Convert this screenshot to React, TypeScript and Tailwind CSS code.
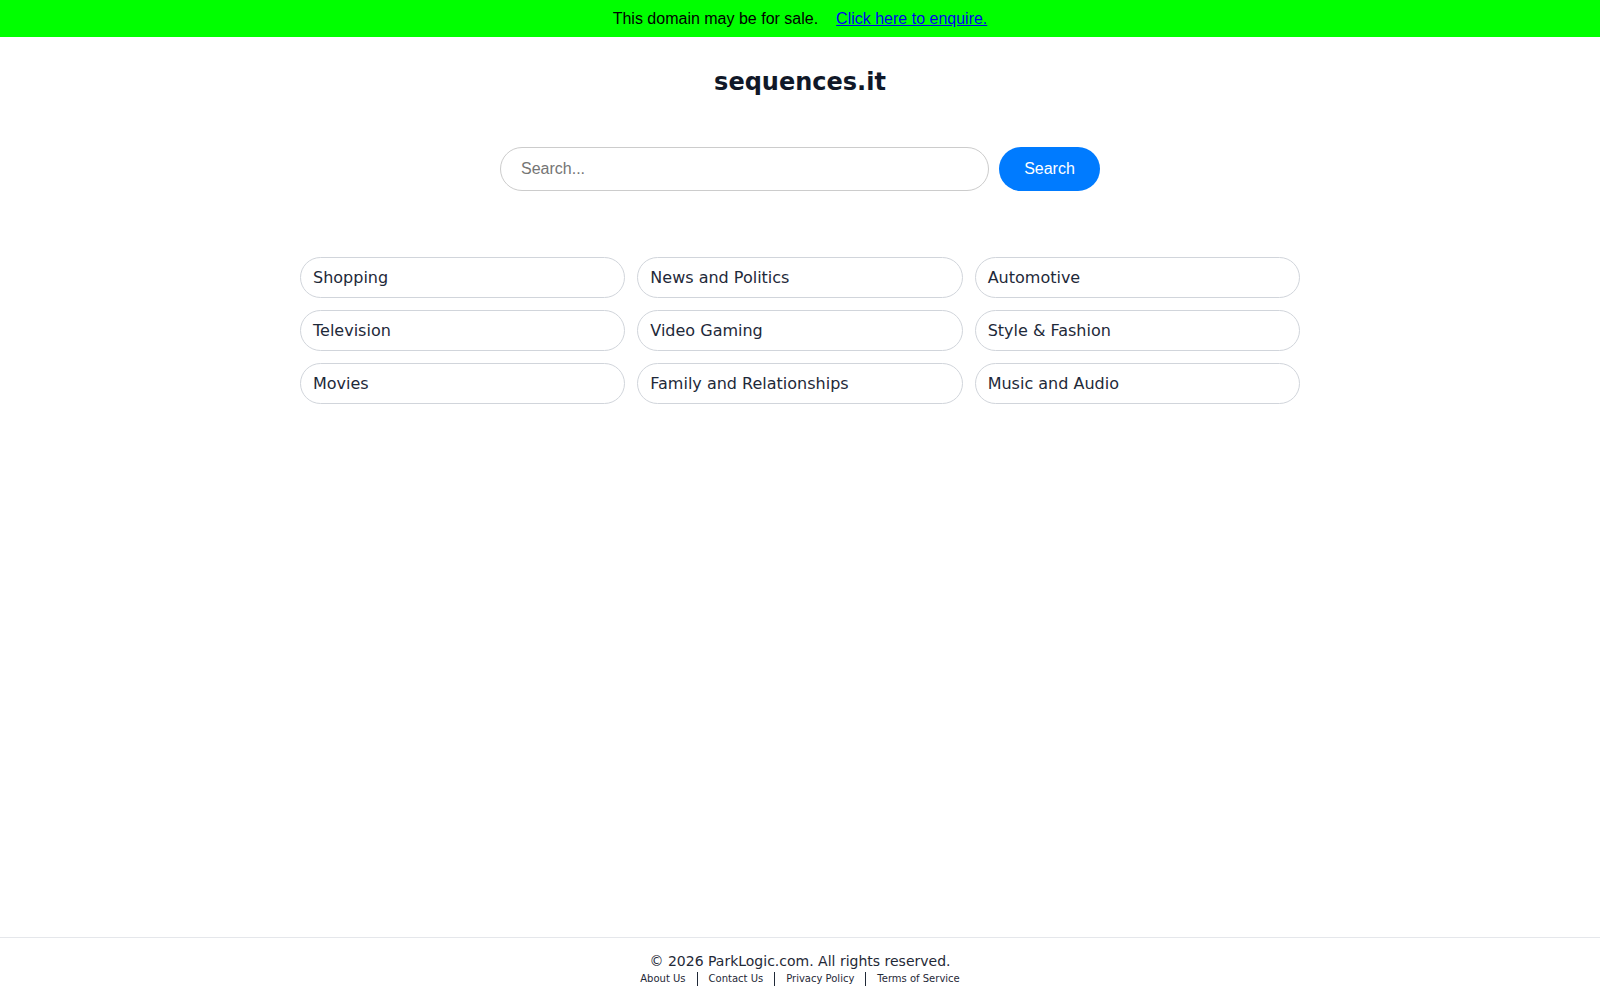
import { useState } from "react";

const categories = [
  "Shopping",
  "News and Politics",
  "Automotive",
  "Television",
  "Video Gaming",
  "Style & Fashion",
  "Movies",
  "Family and Relationships",
  "Music and Audio",
];

const footerLinks = ["About Us", "Contact Us", "Privacy Policy", "Terms of Service"];

export default function App() {
  const [query, setQuery] = useState("");

  return (
    <div className="min-h-screen flex flex-col bg-white font-['DejaVu_Sans',sans-serif]">
      {/* For-sale banner */}
      <div className="h-[37px] bg-[#00ff00] flex items-center justify-center font-['Liberation_Sans',Arial,sans-serif] text-base text-black">
        <span>This domain may be for sale.</span>
        <a href="#" className="ml-[18px] text-[#0000ee] underline">
          Click here to enquire.
        </a>
      </div>

      <main className="flex-1 flex flex-col items-center">
        <h1 className="mt-[29px] text-2xl leading-8 font-bold text-gray-900">sequences.it</h1>

        <form
          className="mt-[49px] flex items-center gap-[10px]"
          onSubmit={e => e.preventDefault()}
        >
          <input
            value={query}
            onChange={e => setQuery(e.target.value)}
            placeholder="Search..."
            className="w-[489px] h-11 rounded-full border border-[#cccccc] px-5 font-['Liberation_Sans',Arial,sans-serif] text-base text-gray-800 placeholder:text-[#757575] outline-none"
          />
          <button
            type="submit"
            className="w-[101px] h-11 rounded-full bg-[#007bff] text-white font-['Liberation_Sans',Arial,sans-serif] text-base"
          >
            Search
          </button>
        </form>

        {/* Related topics */}
        <div className="mt-[66px] w-[1000px] grid grid-cols-3 gap-x-3 gap-y-3">
          {categories.map(c => (
            <a
              key={c}
              href="#"
              className="h-[41px] flex items-center rounded-full border border-[#d1d5db] px-3 text-base text-gray-800"
            >
              {c}
            </a>
          ))}
        </div>
      </main>

      <footer className="border-t border-[#e5e7eb] pt-[13px] pb-[13px] flex flex-col items-center text-[#1f2937]">
        <p className="text-sm leading-5">© 2026 ParkLogic.com. All rights reserved.</p>
        <div className="flex items-center h-4">
          {footerLinks.map((l, i) => {
            const first = i === 0;
            const last = i === footerLinks.length - 1;
            return (
              <a
                key={l}
                href="#"
                className={
                  first
                    ? "text-[10px] leading-[14px] pr-[11px]"
                    : last
                      ? "text-[10px] leading-[14px] pl-[11px] border-l border-[#1f2937]"
                      : "text-[10px] leading-[14px] px-[11px] border-l border-[#1f2937]"
                }
              >
                {l}
              </a>
            );
          })}
        </div>
      </footer>
    </div>
  );
}
